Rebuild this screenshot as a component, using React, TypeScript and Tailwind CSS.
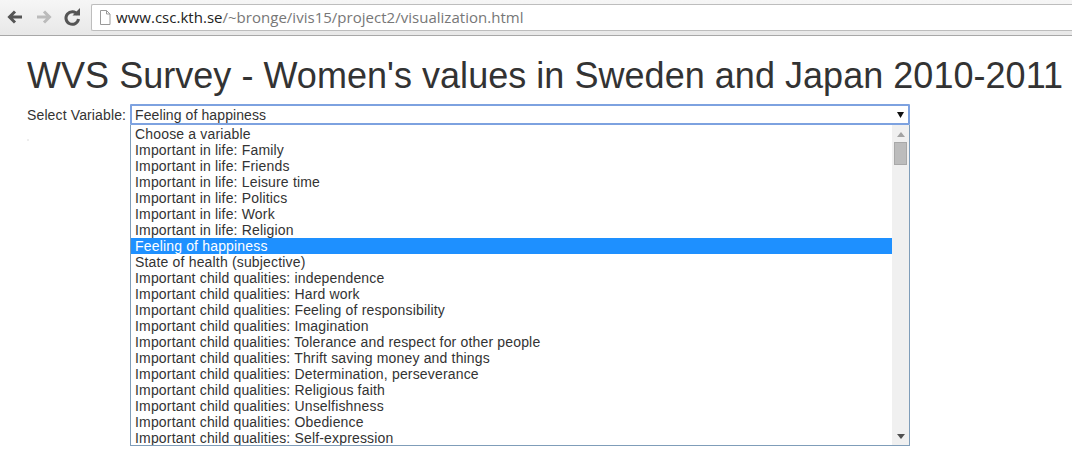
const options = [
  'Choose a variable',
  'Important in life: Family',
  'Important in life: Friends',
  'Important in life: Leisure time',
  'Important in life: Politics',
  'Important in life: Work',
  'Important in life: Religion',
  'Feeling of happiness',
  'State of health (subjective)',
  'Important child qualities: independence',
  'Important child qualities: Hard work',
  'Important child qualities: Feeling of responsibility',
  'Important child qualities: Imagination',
  'Important child qualities: Tolerance and respect for other people',
  'Important child qualities: Thrift saving money and things',
  'Important child qualities: Determination, perseverance',
  'Important child qualities: Religious faith',
  'Important child qualities: Unselfishness',
  'Important child qualities: Obedience',
  'Important child qualities: Self-expression',
];

function Toolbar() {
  return (
    <div className="h-[36px] flex items-start pt-[4px] border-b border-[#a8a8a8] bg-gradient-to-b from-[#f6f6f6] to-[#e8e8e8]">
      <div className="w-[91px] h-[26px] shrink-0 flex items-center">
        <svg width="91" height="26" viewBox="0 0 91 26" fill="none">
          <path d="M22 13H10M15 7.500L9.500 13l5.500 5.500" stroke="#555" strokeWidth="3" />
          <path d="M37 13h13M44 7.500l5.500 5.500L44 18.500" stroke="#bbb" strokeWidth="3" />
          <path d="M77.500 10.500A6.300 6.300 0 1 0 78.500 15" stroke="#555" strokeWidth="3" />
          <path d="M72.500 11.500H80V4z" fill="#555" />
        </svg>
      </div>
      <div className="h-[27px] flex-1 flex items-center pl-[7px] bg-white border border-r-0 border-[#bdbdbd] rounded-l-[2px]">
        <svg width="12" height="15" viewBox="0 0 12 15" fill="none" className="shrink-0">
          <path d="M1.500.5h6l3.500 3.500v10.500h-9.500z" fill="#fff" stroke="#999" />
          <path d="M7.500.5v3.500h3.500" stroke="#999" />
        </svg>
        <div className="ml-[5px] text-[15px] tracking-[0.02px] font-['Open_Sans','Liberation_Sans',sans-serif] whitespace-nowrap">
          <span className="text-[#222]">www.csc.kth.se</span>
          <span className="text-[#777]">/~bronge/ivis15/project2/visualization.html</span>
        </div>
      </div>
    </div>
  );
}

export default function App() {
  return (
    <div className="w-[1072px] h-[459px] overflow-hidden bg-white font-['Liberation_Sans',Arial,sans-serif] text-[#333]">
      <Toolbar />
      <div className="pl-[27px]">
        <h1 className="text-[36px] leading-[40px] tracking-[0.035px] pt-[20px] mb-[8px] whitespace-nowrap">
          WVS Survey - Women's values in Sweden and Japan 2010-2011
        </h1>
        <div className="flex items-start">
          <div className="w-[103px]">
            <div className="pt-[1px] text-[14px] leading-[20px] tracking-[0.13px]">Select Variable:</div>
            <div className="w-[2px] h-[2px] mt-[14px] bg-[#eeeeee]" />
          </div>
          <div className="w-[780px]">
            <div className="h-[21px] flex items-center justify-between pl-[3px] pr-[4px] border-2 border-[#7da2e0] rounded-[1px] text-[14px] leading-[16px] tracking-[0.1px] text-[#333]">
              <span>Feeling of happiness</span>
              <svg width="7" height="6" viewBox="0 0 7 6">
                <path d="M0 0h7L3.500 6z" fill="#111" />
              </svg>
            </div>
            <div className="h-[321px] flex border border-t-0 border-[#7f9db9]">
              <ul className="flex-1 pt-[1px] overflow-hidden text-[14px] leading-[16px] tracking-[0.17px]">
                {options.map((option) => (
                  <li
                    key={option}
                    className={
                      option === 'Feeling of happiness'
                        ? 'h-[16px] pl-[4px] bg-[#1e90ff] text-white'
                        : 'h-[16px] pl-[4px]'
                    }
                  >
                    {option}
                  </li>
                ))}
              </ul>
              <div className="w-[17px] shrink-0 flex flex-col items-center bg-[#f0f0f0]">
                <svg width="8" height="5" viewBox="0 0 8 5" className="mt-[7px]">
                  <path d="M4 0l4 5H0z" fill="#a3a3a3" />
                </svg>
                <div className="w-[13px] h-[23px] mt-[5px] bg-[#bcbcbc] border border-[#a8a8a8]" />
                <svg width="8" height="5" viewBox="0 0 8 5" className="mt-auto mb-[6px]">
                  <path d="M0 0h8L4 5z" fill="#505050" />
                </svg>
              </div>
            </div>
          </div>
        </div>
      </div>
    </div>
  );
}
